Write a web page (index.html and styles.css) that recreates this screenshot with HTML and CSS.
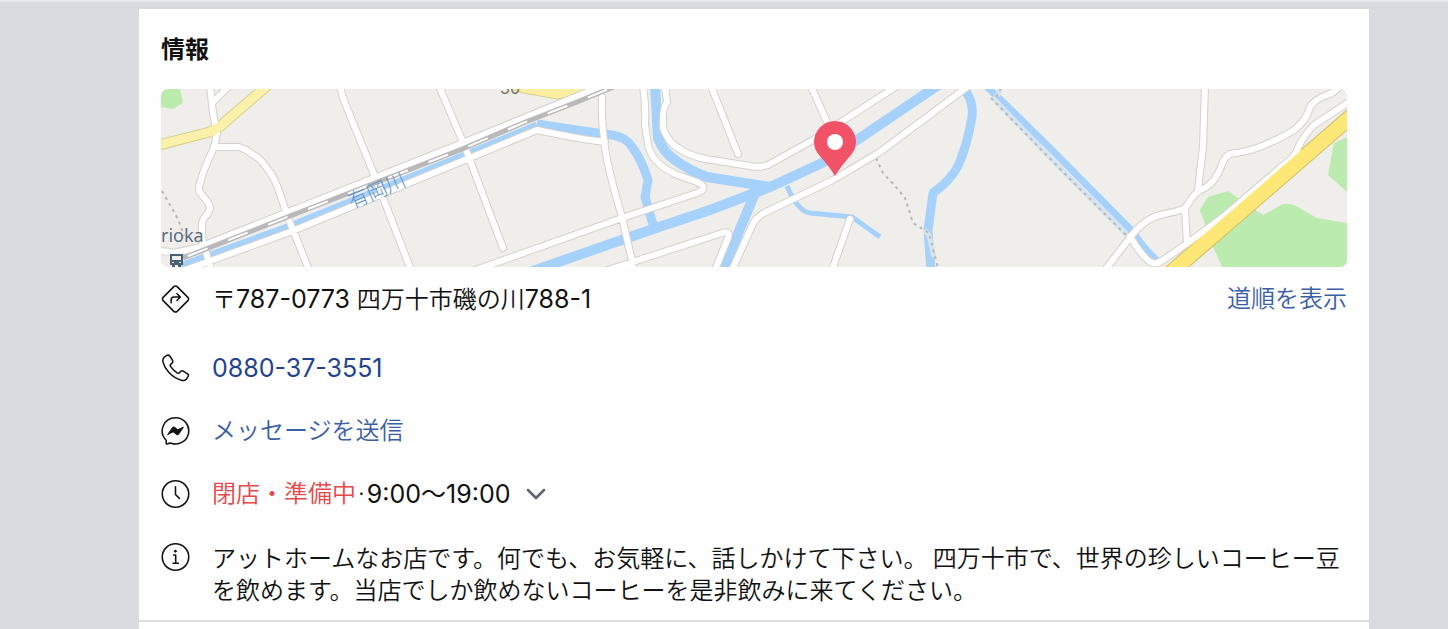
FILE: index.html
```html
<!DOCTYPE html>
<html lang="ja">
<head>
    <meta charset="UTF-8">
    <meta name="viewport" content="width=device-width, initial-scale=1.0">
    <title>情報</title>
    <link rel="stylesheet" href="styles.css">
</head>
<body>
    <main class="card">
        <section class="info">
            <h1>情報</h1>

            <!-- Map -->
            <svg class="map" viewBox="161 89 1186 178" role="img" aria-label="地図">
                <defs>
                    <path id="roads" d="M210 86L213 113L217 133Q216 142 212 152Q204 168 200 183Q197 190 202 195Q209 203 210 207Q210 212 205 217Q201 221 202 230L203 247
                        M228 87L213 102
                        M215 147L238 147Q244 148 252 154Q262 160 266 167Q275 177 281 197L289 220L309 270
                        M340 86L343 98L375 177L411 270
                        M439 86L465 147L503 248
                        M180 272L290 232L460 162L537 130Q560 135 583 139L605 142
                        M206 252L210 267
                        M155 252Q166 250 173 253L197 248L460 144L617 80
                        M602 97Q601 120 605 147Q608 170 622 217L634 270
                        M470 272L622 218L697 193Q710 188 697 182L675 174Q652 163 648 145L645 125Q646 105 643 86
                        M665 86L667 102Q662 108 663 128Q668 144 685 152Q696 158 712 160L750 166Q760 168 768 165L813 140L897 86
                        M711 86L738 154
                        M605 271L722 233Q731 230 728 238L715 270
                        M732 270L752 226Q755 218 764 213L833 180L880 152L970 85
                        M811 86L827 122
                        M850 219L832 270
                        M1205 86L1203 147L1198 190
                        M1340 86Q1334 93 1327 95Q1314 100 1310 107Q1307 120 1294 130Q1280 139 1257 148Q1245 152 1230 154Q1224 157 1221 167Q1215 182 1205 188Q1196 191 1190 201L1185 208Q1180 211 1164 214Q1145 218 1132 235L1105 270
                        M1185 208L1187 244
                        M1130 236Q1140 254 1149 261Q1155 266 1163 260L1188 243L1223 217L1280 168Q1296 157 1298 148Q1303 136 1314 125L1352 100"/>
                    <path id="highway" d="M1168 275L1355 113"/>
                    <path id="avenue" d="M155 146L206 133Q218 130 225 122L268 85"/>
                </defs>
                <rect class="land" x="161" y="89" width="1186" height="178"/>
                <path class="park" d="M161 89H180L183 103L173 109L161 107Z"/>
                <path class="park" d="M1200 210L1208 197L1228 191L1238 198L1263 215L1283 204Q1290 203 1296 206L1317 218L1347 223V267H1222L1213 247Z"/>
                <path class="park" d="M1347 137L1334 143L1328 175L1347 192Z"/>

                <path class="water narrow" d="M180 266L290 226L460 157L537 125"/>
                <path class="water mid" d="M537 124L583 131L612 135Q626 137 632 147Q642 160 648 180L645 197L654 228"/>
                <path class="water" d="M530 272L653 229L710 210L770 187L822 163L857 140L940 84"/>
                <path class="water" d="M655 86L658 138Q663 152 675 160Q690 171 707 177L770 187"/>
                <path class="water" d="M755 193L722 272"/>
                <path class="water stream" d="M787 186Q792 198 797 204Q803 212 810 213L852 217L880 237"/>
                <path class="water mid" d="M963 88Q974 100 972 117Q967 146 958 166Q951 180 933 193L928 230L931 270"/>
                <path class="water narrow" d="M986 86L1000 99L1052 150L1133 232Q1146 252 1160 263"/>
                <path class="path-bed" d="M992 97L1060 168L1128 236M997 96L1001 88M924 230L929 235L934 257"/>
                <path class="footpath" d="M1001 88L996 97M991 98L1059 168L1127 236M876 158L883 173Q899 190 905 198Q909 210 913 223L929 233L938 268M162 191L178 219L184 236"/>

                <path class="avenue-fill" d="M503 86L523 93L557 99Q574 98 590 86Z"/>
                <use href="#roads" class="road-case"/>
                <use href="#avenue" class="avenue-case"/>
                <use href="#highway" class="highway-case"/>
                <use href="#roads" class="road"/>
                <use href="#avenue" class="avenue"/>
                <use href="#highway" class="highway"/>
                <path class="rail" d="M183 258L290 216L460 150L523 123L577 102L616 86"/>
                <path class="rail-dash" d="M188 256L290 216L460 150L523 123L577 102L616 86"/>

                <text class="map-text" x="161" y="242">rioka</text>
                <text class="river-text" transform="translate(352 209) rotate(-23)">有岡川</text>
                <text class="route-text" x="500" y="94">30</text>
                <g class="bus">
                    <path d="M170 254H183V265H181V267H178V265H175V267H172V265H170Z"/>
                    <path class="bus-light" d="M172 256H181V260H172ZM172 262H174V263H172ZM179 262H181V263H179Z"/>
                </g>
                <path class="pin" d="M835 176Q829 166 819 155Q814 149 814 142A21 21 0 0 1 856 142Q856 149 851 155Q841 166 835 176Z"/>
                <circle class="pin-dot" cx="835" cy="142" r="8"/>
            </svg>

            <!-- Contact details -->
            <div class="row address">
                <svg class="icon" viewBox="0 0 30 30" aria-hidden="true">
                    <path d="M13.300 2.200Q15 .8 16.700 2.200L27.800 13.300Q29.200 15 27.800 16.700L16.700 27.800Q15 29.200 13.300 27.800L2.200 16.700Q.8 15 2.200 13.300Z"/>
                    <path d="M10.500 19V16Q10.500 13 13.500 13H19.500M16.500 9.500L20 13L16.500 16.500"/>
                </svg>
                <span>〒<span class="num">787-0773</span> 四万十市磯の川<span class="num">788-1</span></span>
                <a class="directions" href="#">道順を表示</a>
            </div>
            <div class="row">
                <svg class="icon" viewBox="0 0 30 30" aria-hidden="true">
                    <path d="M3.500 3.700L6 2Q7.800 1.100 9.200 2.700L11.900 7Q12.700 8.700 11.300 10L9.900 11.200Q9.200 12.200 9.900 13.400Q12.500 17.400 16.600 20.100Q17.900 20.800 18.800 20L20.200 18.600Q21.500 17.500 23 18.200L27.500 21Q29 22.300 27.900 24L26.400 26.300Q24.500 28.500 21.400 27.800Q14.200 26 8.200 19.700Q3.500 14.600 2 8.700Q1.500 5.500 3.500 3.700Z"/>
                </svg>
                <a class="phone num" href="tel:0880373551">0880-37-3551</a>
            </div>
            <div class="row">
                <svg class="icon" viewBox="0 0 30 30" aria-hidden="true">
                    <path d="M15 1.200A13.600 13.600 0 1 1 10.500 27.600Q8.500 27.400 6.700 28.300Q5.200 29 5.400 27V24.500A13.600 13.600 0 0 1 15 1.200Z"/>
                    <path class="solid" d="M7 18.500L12 11.300Q13 10.300 14.200 11.200L17.300 13.700L23.200 11L18.300 18.300Q17.300 19.500 16 18.500L12.800 16Z"/>
                </svg>
                <a href="#">メッセージを送信</a>
            </div>
            <div class="row">
                <svg class="icon" viewBox="0 0 30 30" aria-hidden="true">
                    <circle cx="15" cy="15" r="13.700"/>
                    <path d="M15 7.500V15.500L19 19.500"/>
                </svg>
                <button class="hours" type="button" aria-expanded="false">
                    <span class="closed">閉店・準備中</span><span>·</span><span class="num">9:00～19:00</span>
                    <svg class="chevron" viewBox="0 0 20 12" aria-hidden="true"><path d="M2 2L10 10L18 2"/></svg>
                </button>
            </div>
            <div class="row">
                <svg class="icon" viewBox="0 0 30 30" aria-hidden="true">
                    <circle cx="15" cy="15" r="13.700"/>
                    <path d="M13 13H15.200V21.500M12.500 21.500H18"/>
                    <circle class="solid" cx="14.800" cy="9" r="1"/>
                </svg>
                <p>アットホームなお店です。何でも、お気軽に、話しかけて下さい。 四万十市で、世界の珍しいコーヒー豆を飲めます。当店でしか飲めないコーヒーを是非飲みに来てください。</p>
            </div>
        </section>
    </main>
</body>
</html>
```

FILE: styles.css
```css
* {
    box-sizing: border-box;
}

body {
    font-family: "Inter", "Noto Sans CJK JP", sans-serif;
    font-size: 24px;
    line-height: 32px;
    color: #111;
    background-color: #dadbe0;
    border-top: 2px solid #e7e8ec;
    margin: 0;
    padding: 7px 79px 0 139px;
    display: flex;
    flex-direction: column;
    min-height: 100vh;
}

.card {
    background-color: #fefefe;
    flex: 1;
}

.info {
    padding: 25px 22px 15px;
    border-bottom: 2px solid #dedfe6;
}

h1 {
    font-size: 24px;
    font-weight: bold;
    line-height: 32px;
    margin: 0 0 23px;
}

a {
    color: #3b5ea8;
    text-decoration: none;
}

a:hover {
    text-decoration: underline;
}

p {
    font-family: "Noto Sans CJK JP", sans-serif;
    margin: 0;
}

/* Rows */
.row {
    display: flex;
    align-items: flex-start;
    gap: 22px;
    font-weight: 350;
    margin-bottom: 31px;
}

.row:last-child {
    margin-bottom: 0;
}

.address {
    margin-bottom: 36px;
}

.directions {
    margin-left: auto;
}

.num {
    font-size: 25px;
    font-weight: 400;
}

.phone {
    color: #1f4390;
}

.icon {
    flex: none;
    width: 29px;
    height: 32px;
    fill: none;
    stroke: #111;
    stroke-width: 1.6;
    stroke-linecap: round;
    stroke-linejoin: round;
}

.icon .solid {
    fill: #111;
    stroke-width: 1;
}

.hours {
    display: flex;
    align-items: center;
    gap: 2px;
    padding: 0;
    border: none;
    background: none;
    font: inherit;
    color: #111;
    cursor: pointer;
}

.closed {
    color: #e5484a;
}

.chevron {
    width: 20px;
    margin-left: 14px;
    fill: none;
    stroke: #5f6470;
    stroke-width: 2.5;
    stroke-linecap: round;
    stroke-linejoin: round;
}

/* Map */
.map {
    display: block;
    width: 100%;
    margin-bottom: 16px;
    border-radius: 7px;
    fill: none;
}

.land {
    fill: #f0eeeb;
}

.park {
    fill: #bcebb0;
}

.water {
    stroke: #a5d1fb;
    stroke-width: 10;
    stroke-linejoin: round;
}

.water.mid {
    stroke-width: 9;
}

.water.narrow {
    stroke-width: 7;
}

.water.stream {
    stroke-width: 5;
}

.path-bed {
    stroke: #d5e4ef;
    stroke-width: 5;
}

.footpath {
    stroke: #b9b8b4;
    stroke-width: 2;
    stroke-dasharray: 3 4;
}

.road-case {
    stroke: #d3d1cd;
    stroke-width: 8;
    stroke-linecap: round;
    stroke-linejoin: round;
}

.road {
    stroke: #fff;
    stroke-width: 6;
    stroke-linecap: round;
    stroke-linejoin: round;
}

.avenue-case {
    stroke: #d9cf91;
    stroke-width: 11;
}

.avenue {
    stroke: #faf1ab;
    stroke-width: 9;
}

.avenue-fill {
    fill: #faeea0;
    stroke: #d9cf91;
}

.highway-case {
    stroke: #cfbd69;
    stroke-width: 16;
}

.highway {
    stroke: #fde777;
    stroke-width: 14;
}

.rail {
    stroke: #b9b9b9;
    stroke-width: 5;
}

.rail-dash {
    stroke: #fff;
    stroke-width: 2;
    stroke-dasharray: 21 22;
}

.map-text {
    font-family: "Noto Sans", sans-serif;
    font-size: 18px;
    fill: #5a6d80;
}

.river-text {
    font-family: "Noto Sans CJK JP", sans-serif;
    font-size: 20px;
    font-weight: 300;
    fill: #5b93cd;
}

.route-text {
    font-size: 16px;
    fill: #77705a;
}

.bus {
    fill: #4a6075;
}

.bus-light {
    fill: #f0eeeb;
}

.pin {
    fill: #f25268;
}

.pin-dot {
    fill: #fff;
}
```
